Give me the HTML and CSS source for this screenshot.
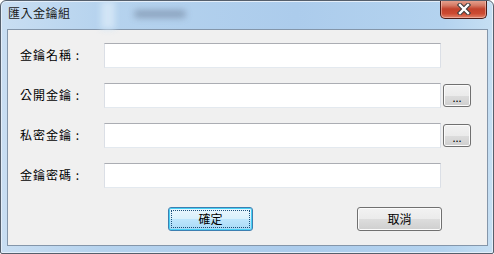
FILE: index.html
```html
<!DOCTYPE html>
<html lang="zh-Hant">
<head>
<meta charset="utf-8">
<title>匯入金鑰組</title>
<link rel="stylesheet" href="styles.css">
</head>
<body>
<div class="window">
  <div class="titlebar">
    <div class="glass-streak"></div>
    <div class="glass-blur"></div>
    <div class="title">匯入金鑰組</div>
    <button class="close" aria-label="關閉">
      <svg width="16" height="12" viewBox="0 0 16 12">
        <path d="M4 2 L12 10 M12 2 L4 10" stroke="#3b3b3b" stroke-width="4.4" stroke-linecap="square"/>
        <path d="M4 2 L12 10 M12 2 L4 10" stroke="#ffffff" stroke-width="2.4" stroke-linecap="square"/>
      </svg>
    </button>
  </div>
  <div class="client">
    <div class="form">
      <label class="label">金鑰名稱 :</label>
      <input class="field" type="text">
      <span></span>
      <label class="label">公開金鑰 :</label>
      <input class="field" type="text">
      <button class="btn small">...</button>
      <label class="label">私密金鑰 :</label>
      <input class="field" type="text">
      <button class="btn small">...</button>
      <label class="label">金鑰密碼 :</label>
      <input class="field" type="text">
      <span></span>
    </div>
    <div class="actions">
      <button class="btn default"><span class="focus">確定</span></button>
      <button class="btn">取消</button>
    </div>
  </div>
</div>
</body>
</html>
```
FILE: styles.css
```css
html, body {
  margin: 0;
  padding: 0;
  background: #ffffff;
}
body {
  width: 494px;
  height: 254px;
  overflow: hidden;
  font-family: "Noto Sans CJK TC", "Noto Sans", sans-serif;
  font-size: 12px;
  color: #000;
}
.window {
  box-sizing: border-box;
  width: 494px;
  height: 254px;
  border: 1px solid #555f6c;
  border-radius: 6px 6px 2px 2px;
  background: linear-gradient(90deg, #c9def2 0%, #b6d3ee 20%, #acccec 60%, #b4d3ef 90%, #c6dff3 100%);
  box-shadow: inset 0 0 0 1px #e4eef9;
  display: flex;
  flex-direction: column;
  overflow: hidden;
}
.titlebar {
  position: relative;
  height: 28px;
  display: flex;
  align-items: flex-start;
  justify-content: space-between;
}
.glass-streak {
  position: absolute;
  left: 100px;
  top: 0;
  width: 14px;
  height: 28px;
  background: #d2e5f6;
  filter: blur(3px);
}
.glass-blur {
  position: absolute;
  left: 133px;
  top: 9px;
  width: 52px;
  height: 8px;
  border-radius: 4px;
  background: #7f94ae;
  filter: blur(3px);
  opacity: 0.75;
}
.title {
  position: relative;
  padding: 4px 0 0 7px;
  font-size: 12px;
  line-height: 16px;
  color: #1a1a1a;
  letter-spacing: 0.5px;
}
.close {
  width: 47px;
  height: 19px;
  margin: -1px 6px 0 0;
  padding: 0;
  border: 1px solid #4b1c17;
  border-top: none;
  border-radius: 0 0 5px 5px;
  background: linear-gradient(180deg, #e8a795 0%, #d57a65 30%, #c2422c 50%, #cc4a31 75%, #e0836a 100%);
  box-shadow: inset 0 0 0 1px rgba(255, 220, 210, 0.45);
  display: flex;
  align-items: center;
  justify-content: center;
}
.client {
  box-sizing: border-box;
  margin: 0 5px 0 6px;
  height: 217px;
  border: 1px solid #8496aa;
  background: #f0f0f0;
  padding: 13px 0 0 12px;
}
.form {
  display: grid;
  grid-template-columns: 84px 337px 30px;
  grid-auto-rows: 25px;
  row-gap: 15px;
  column-gap: 0;
  align-items: center;
}
.label {
  font-size: 12px;
  letter-spacing: 1px;
  line-height: 16px;
  padding-bottom: 1px;
}
.field {
  box-sizing: border-box;
  width: 337px;
  height: 25px;
  margin: 0;
  border: 1px solid #dbdfe6;
  border-top-color: #abadb3;
  border-bottom-color: #e3e9ef;
  background: #ffffff;
  outline: none;
}
.btn {
  box-sizing: border-box;
  margin: 0;
  padding: 0;
  border: 1px solid #707070;
  border-radius: 3px;
  background: linear-gradient(180deg, #f2f2f2 0%, #ebebeb 50%, #dddddd 50%, #cfcfcf 100%);
  box-shadow: inset 0 0 0 1px #fbfbfb;
  font-family: "Noto Sans CJK TC", "Noto Sans", sans-serif;
  font-size: 12px;
  color: #000;
  width: 85px;
  height: 24px;
  line-height: 20px;
}
.btn.small {
  width: 28px;
  height: 23px;
  justify-self: end;
  font-size: 11px;
  line-height: 14px;
  padding-top: 2px;
}
.actions {
  display: flex;
  gap: 104px;
  margin: 19px 0 0 148px;
}
.btn.default {
  border-color: #3c7fb1;
  background: linear-gradient(180deg, #eaf6fd 0%, #d9f0fc 50%, #bee6fd 50%, #a7d9f5 100%);
  box-shadow: inset 0 0 0 1px #48d0f5;
  padding: 2px;
}
.btn.default .focus {
  display: block;
  height: 100%;
  box-sizing: border-box;
  border: 1px dotted #1a4f7a;
  line-height: 16px;
}
```
